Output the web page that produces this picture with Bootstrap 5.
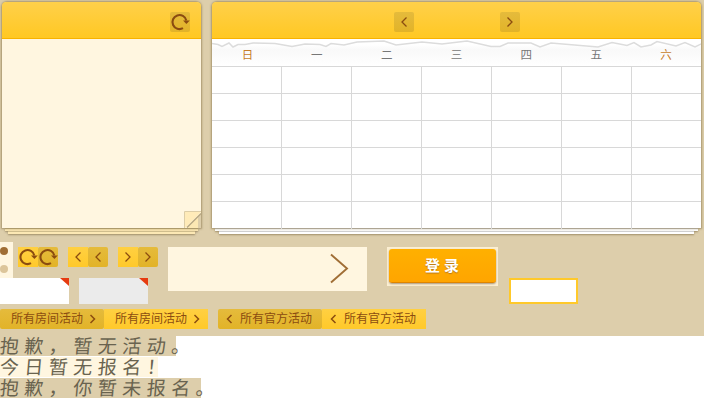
<!DOCTYPE html>
<html lang="zh-CN">
<head>
<meta charset="utf-8">
<title>活动日历</title>
<link href="https://cdn.jsdelivr.net/npm/bootstrap@5.3.0/dist/css/bootstrap.min.css" rel="stylesheet">
<style>
body{font:12px/20px "Liberation Sans","Noto Sans CJK SC",sans-serif;color:#8b4c10;overflow:hidden;background:#fff}
svg{display:block;flex:none}
.board{height:336px;background:#ddceab;padding:2px 2px 0}
.sheet{position:relative;height:226px;border-radius:5px 5px 0 0;box-shadow:0 0 2px 1px rgba(125,105,60,.55)}
.sheet-note{width:199px;background:#fff6e0;margin-right:11px}
.sheet-cal{width:489px;background:#fff}
.bar{height:37px;background:linear-gradient(#ffd04a,#ffc823);border-bottom:1px solid #f8b200;border-radius:4px 4px 0 0}
.bar-end{padding:10px 11px 0 0}
.bar-mid{padding:10px 0 0 182px;gap:86px}
.stack-wrap{height:240px}
.leaves{width:199px}
.leaf{height:3px;box-shadow:0 1px 2px rgba(110,90,50,.55)}
.leaf-note{background:#fce8b4;border-top:1px solid #cfbd8c}
.leaf-cal{background:#fff;border-top:1px solid #cfcfcf}
.l1{margin:0 3px}.l2{margin:0 6px}
.leaf-cal.l2{margin:0 7px}
.fold{position:absolute;right:0;bottom:0}
.sq{width:20px;height:20px}
.lit{background:linear-gradient(#ffd042,#ffc92a)}
.dim{background:linear-gradient(#e5bb3c,#e2b328);border-radius:2px}
.week{height:28px;border-bottom:1px solid #d8d8d8;background:linear-gradient(#fff 20%,#f9f9f9 40%,#fff);position:relative}
.torn{position:absolute;left:0;top:0}
.day{width:69.900px;text-align:center;color:#777;font-size:11.500px;padding-top:6px}
.rest{color:#c67d2a}
.day:first-of-type{padding-left:1px}
.cells{height:27px;border-bottom:1px solid #d8d8d8}
.cells:last-child{border-bottom:0}
.cells>div{width:70px;border-right:1px solid #d8d8d8}
.cells>div:last-child{border-right:0;width:69px}
.tools{height:67px;margin-left:-2px}
.tool-left{width:168px}
.tool-pairs{margin-top:5px;gap:10px}
.dots{width:13px;height:36px;background:#fff6e0;margin-right:5px}
.tag-box{width:69px;height:26px;background:#fff}
.tag-box.gray{background:#ebebeb}
.corner{width:9px;height:8px;background:#e63b10;clip-path:polygon(0 0,100% 0,100% 100%)}
.wide{width:199px;height:44px;background:#fff6e0;margin-top:5px}
.login{width:111px;height:39px;background:#fbefd3;margin:5px 0 0 20px;padding:2px}
.login button{width:107px;height:34px;border:0;border-radius:3px;background:linear-gradient(#ffb000,#ffa500);border-bottom:1px solid #df8500;box-shadow:0 1px 2px #a8967a;color:#fff;font-size:15px;font-weight:700;line-height:30px;letter-spacing:4px;padding:0 0 0 3px;text-shadow:0 1px 1px #b87818}
.field{width:69px;height:26px;border:2px solid #ffc92a;background:#fff;margin:36px 0 0 11px}
.links{margin-left:-2px}
.link-btn{width:104px;height:20px;line-height:21px;padding-left:11px}
.link-btn.prev{padding-left:8px}
.gap-left{margin-left:10px}
.hand{height:20px;font:19px/18px "Noto Sans CJK SC",sans-serif;letter-spacing:5.500px;color:#69634f;background:#ddceab;white-space:nowrap;margin-bottom:1px}
.hand span{display:inline-block;transform:skewX(-5deg)}
.h1w{width:176px}.h2w{width:158px;background:#fff6e0}.h3w{width:201px}
</style>
<script src="https://cdn.jsdelivr.net/npm/bootstrap@5.3.0/dist/js/bootstrap.bundle.min.js"></script>
</head>
<body>
<svg width="0" height="0" class="position-absolute">
<defs>
<g id="reload" fill="none" stroke="#8b4c10" stroke-width="2.1"><path d="M13 16.100A7 7 0 1 1 16.300 8.500"/><path d="M13 8.500h6.800l-3.400 3.600z" fill="#8b4c10" stroke="none"/></g>
<path id="lt" d="M12.500 5.500L8 10l4.500 4.500" fill="none" stroke="#8b4c10" stroke-width="1.300"/>
<path id="gt" d="M7.500 5.500L12 10l-4.500 4.500" fill="none" stroke="#8b4c10" stroke-width="1.300"/>
</defs>
</svg>
<main class="board">
<div class="d-flex stack-wrap">
<section>
<div class="sheet sheet-note">
<div class="bar bar-end d-flex justify-content-end"><svg class="sq dim"><use href="#reload"/></svg></div>
<svg class="fold" width="17" height="17"><path d="M17 2.500V17H3z" fill="#ddceab"/><path d="M14 5V17H3z" fill="#fce8b4"/><path d="M1 1H17L2 16.500H1z" fill="#ffebb9"/><path d="M.5 17V.5H17" fill="none" stroke="#ddcda6"/><path d="M17 2.500L3 16.500" stroke="#b5a681" stroke-width="1.300"/></svg>
</div>
<div class="leaves"><div class="leaf leaf-note l1"></div><div class="leaf leaf-note l2"></div></div>
</section>
<section>
<div class="sheet sheet-cal">
<div class="bar bar-mid d-flex"><svg class="sq dim"><use href="#lt"/></svg><svg class="sq dim"><use href="#gt"/></svg></div>
<div class="week d-flex">
<svg class="torn" width="489" height="12" viewBox="212 38.500 489 12"><path d="M212 43L218 44 222 46 229 42.500 233 46.500 238 44 245 44 253 42.500 275 43 292 46 305 43.500 320 44 326 46 331 43 344 44.500 357 41.500 384 40.500 396 44.500 422 41.500 442 43.500 467 40.500 491 46 500 46 508 42.500 531 42.500 540 46.500 551 42.500 598 46.500 612 42 627 45 634 42 641 46.500 651 44.500 657 41 676 45.500 685 42 695 46.500 702 43" fill="none" stroke="#dcdcdc" stroke-width="1.500"/></svg>
<div class="day rest">日</div><div class="day">一</div><div class="day">二</div><div class="day">三</div><div class="day">四</div><div class="day">五</div><div class="day rest">六</div>
</div>
<div class="cells d-flex"><div></div><div></div><div></div><div></div><div></div><div></div><div></div></div>
<div class="cells d-flex"><div></div><div></div><div></div><div></div><div></div><div></div><div></div></div>
<div class="cells d-flex"><div></div><div></div><div></div><div></div><div></div><div></div><div></div></div>
<div class="cells d-flex"><div></div><div></div><div></div><div></div><div></div><div></div><div></div></div>
<div class="cells d-flex"><div></div><div></div><div></div><div></div><div></div><div></div><div></div></div>
<div class="cells d-flex"><div></div><div></div><div></div><div></div><div></div><div></div><div></div></div>
</div>
<div class="leaf leaf-cal l1"></div><div class="leaf leaf-cal l2"></div>
</section>
</div>
<div class="tools d-flex">
<div class="tool-left">
<div class="d-flex">
<svg class="dots" width="13" height="36"><circle cx="4" cy="9" r="4" fill="#a06e35"/><circle cx="4" cy="27" r="4" fill="#dcc59a"/></svg>
<div class="d-flex tool-pairs">
<div class="d-flex"><svg class="sq lit"><use href="#reload"/></svg><svg class="sq dim"><use href="#reload"/></svg></div>
<div class="d-flex"><svg class="sq lit"><use href="#lt"/></svg><svg class="sq dim"><use href="#lt"/></svg></div>
<div class="d-flex"><svg class="sq lit"><use href="#gt"/></svg><svg class="sq dim"><use href="#gt"/></svg></div>
</div>
</div>
<div class="d-flex tool-pairs mt-0"><div class="tag-box d-flex justify-content-end"><div class="corner"></div></div><div class="tag-box gray d-flex justify-content-end"><div class="corner"></div></div></div>
</div>
<svg class="wide"><path d="M163 7.500L179 21.500 163 35.500" fill="none" stroke="#a06e35" stroke-width="1.900"/></svg>
<div class="login"><button type="button" class="d-block">登录</button></div>
<div class="field"></div>
</div>
<div class="links d-flex">
<div class="link-btn dim d-flex">所有房间活动<svg width="20" height="20"><path d="M7.500 6l4 4-4 4" fill="none" stroke="#8b4c10" stroke-width="1.500"/></svg></div>
<div class="link-btn lit d-flex">所有房间活动<svg width="20" height="20"><path d="M7.500 6l4 4-4 4" fill="none" stroke="#8b4c10" stroke-width="1.500"/></svg></div>
<div class="link-btn prev dim d-flex gap-left"><svg width="14" height="20"><path d="M5.500 6l-4 4 4 4" fill="none" stroke="#8b4c10" stroke-width="1.500"/></svg>所有官方活动</div>
<div class="link-btn prev lit d-flex"><svg width="14" height="20"><path d="M5.500 6l-4 4 4 4" fill="none" stroke="#8b4c10" stroke-width="1.500"/></svg>所有官方活动</div>
</div>
</main>
<div class="hand h1w"><span>抱歉，暂无活动。</span></div>
<div class="hand h2w"><span>今日暂无报名！</span></div>
<div class="hand h3w"><span>抱歉，你暂未报名。</span></div>
</body>
</html>
